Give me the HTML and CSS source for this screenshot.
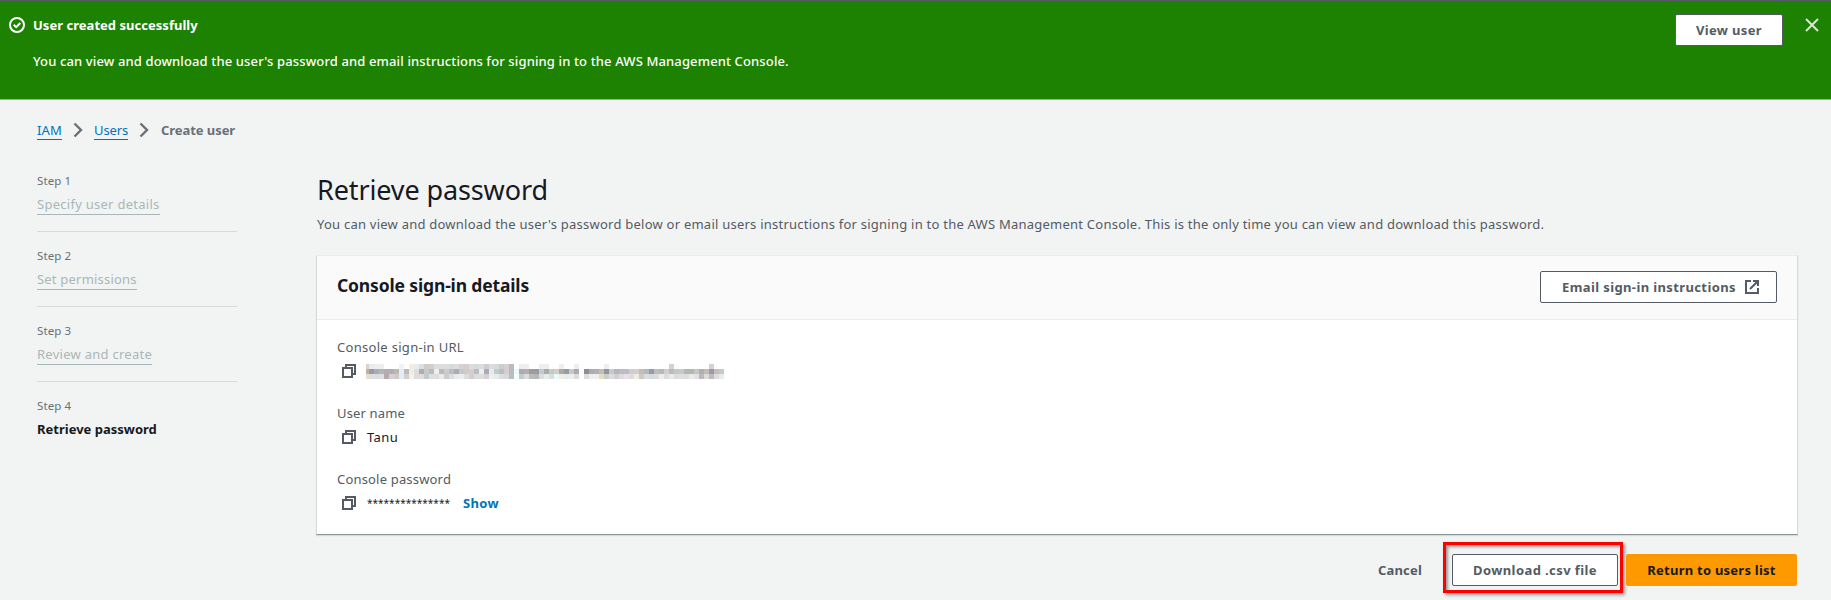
FILE: index.html
```
<!DOCTYPE html>
<html lang="en">
<head>
<meta charset="utf-8">
<title>Create user | IAM</title>
<link rel="stylesheet" href="styles.css">
</head>
<body>
<svg class="defs" aria-hidden="true">
  <symbol id="copy" viewBox="0 0 14 14"><path d="M1 4h9v9H1zM4 4V1h9v9h-3" fill="none" stroke="currentColor" stroke-width="2"/></symbol>
</svg>
<section class="flash">
  <svg class="flash-icon" viewBox="0 0 16 16"><circle cx="8" cy="8" r="7" fill="none" stroke="#fff" stroke-width="2"/><path d="M4.7 7.8 7.2 10.2 11.3 6" fill="none" stroke="#fff" stroke-width="2"/></svg>
  <div class="flash-content">
    <div class="flash-title">User created successfully</div>
    <div class="flash-text">You can view and download the user's password and email instructions for signing in to the AWS Management Console.</div>
  </div>
  <button class="btn view">View user</button>
  <svg class="close" viewBox="0 0 14 14"><path d="M1 1l12 12M13 1 1 13" fill="none" stroke="#d9e8d6" stroke-width="2"/></svg>
</section>
<nav class="crumbs">
  <a class="iam">IAM</a>
  <svg class="chev" viewBox="0 0 10 16"><path d="M1.5 1.5 8 8l-6.500 6.500" fill="none" stroke="#687078" stroke-width="2.400"/></svg>
  <a class="users">Users</a>
  <svg class="chev" viewBox="0 0 10 16"><path d="M1.500 1.500 8 8l-6.500 6.500" fill="none" stroke="#687078" stroke-width="2.400"/></svg>
  <span class="here">Create user</span>
</nav>
<div class="layout">
  <ol class="steps">
    <li><small>Step 1</small><a>Specify user details</a></li>
    <li><small>Step 2</small><a class="perms">Set permissions</a></li>
    <li><small>Step 3</small><a>Review and create</a></li>
    <li><small>Step 4</small><b>Retrieve password</b></li>
  </ol>
  <main>
    <h1>Retrieve password</h1>
    <p class="desc">You can view and download the user's password below or email users instructions for signing in to the AWS Management Console. This is the only time you can view and download this password.</p>
    <section class="card">
      <header>
        <h2>Console sign-in details</h2>
        <button class="btn email"><span>Email sign-in instructions</span>
          <svg class="ext" viewBox="0 0 14 14"><path d="M6 1H1v12h12V8M8 1h5v5M12.500 1.500 5 9" fill="none" stroke="currentColor" stroke-width="2"/></svg>
        </button>
      </header>
      <div class="fields">
        <div class="field"><div class="label url">Console sign-in URL</div><div class="value"><svg class="copy"><use href="#copy"/></svg><svg class="mosaic" id="mosaic" viewBox="0 0 358 15" shape-rendering="crispEdges"></svg></div></div>
        <div class="field"><div class="label name">User name</div><div class="value"><svg class="copy"><use href="#copy"/></svg><span class="user">Tanu</span></div></div>
        <div class="field"><div class="label pass">Console password</div><div class="value"><svg class="copy"><use href="#copy"/></svg><span class="stars">***************</span><a class="show">Show</a></div></div>
      </div>
    </section>
    <footer>
      <button class="cancel">Cancel</button>
      <div class="highlight"><button class="btn download">Download .csv file</button></div>
      <button class="btn primary">Return to users list</button>
    </footer>
  </main>
</div>
<script src="mosaic.js"></script>
</body>
</html>
```
FILE: styles.css
```
* { box-sizing: border-box; }
body { margin: 0; height: 600px; overflow: hidden; background: #f2f3f3; color: #16191f; font: 13px/22px "Noto Sans", "Open Sans", sans-serif; white-space: nowrap; }
.defs { position: absolute; width: 0; height: 0; }
svg { display: block; flex: none; }
button { font: inherit; margin: 0; }
.flash { display: flex; align-items: flex-start; height: 100px; padding: 13px 12px 0 9px; background: #1d8102; color: #fff; border-top: 1px solid #545b64; border-bottom: 1px solid #a5a9a3; }
.flash-icon { width: 16px; height: 16px; margin-top: 3px; }
.flash-content { flex: 1; margin-left: 8px; }
.flash-title { font-weight: 700; letter-spacing: .03px; }
.flash-text { margin-top: 14px; font-weight: 500; letter-spacing: .13px; }
.btn { height: 32px; padding: 0; display: flex; align-items: center; justify-content: center; background: #fff; color: #545b64; border: 1px solid #545b64; border-radius: 2px; font-weight: 700; }
.view { width: 108px; letter-spacing: .34px; }
.close { width: 14px; height: 14px; margin: 4px 0 0 22px; }
.crumbs { display: flex; align-items: center; height: 22px; margin: 19px 0 0 37px; }
.crumbs a { height: 20px; line-height: 21px; color: #0073bb; border-bottom: 1px solid #0073bb; }
.iam { width: 25px; letter-spacing: .15px; }
.users { width: 34px; letter-spacing: -.1px; }
.chev { width: 10px; height: 16px; margin: 0 11px; }
.here { margin-left: 1px; color: #687078; font-weight: 700; letter-spacing: -.06px; }
.layout { display: flex; padding: 29px 33px 0 37px; }
.steps { list-style: none; width: 200px; margin: 0; padding: 0; }
.steps li { height: 75px; display: flex; flex-direction: column; align-items: flex-start; }
.steps li:not(:last-child) { height: 62px; margin-bottom: 13px; border-bottom: 1px solid #d5dbdb; }
.steps small { font-size: 11.5px; line-height: 22px; color: #687078; letter-spacing: .1px; }
.steps a { height: 21px; margin-top: 2px; line-height: 20px; color: #aab7b8; border-bottom: 1px solid #aab7b8; letter-spacing: .27px; }
.steps .perms { letter-spacing: .2px; }
.steps b { margin-top: 2px; line-height: 20px; letter-spacing: 0; }
main { flex: 1; margin-left: 79px; min-width: 0; }
h1 { margin: 2px 0 0 1px; font-size: 27px; line-height: 36px; font-weight: 400; letter-spacing: -.12px; }
.desc { margin: 5px 0 0 1px; color: #545b64; letter-spacing: .237px; }
.card { height: 280px; margin-top: 20px; background: #fff; border: 1px solid #d5dbdb; border-top-color: #eaeded; border-bottom-color: #879596; box-shadow: 0 1px 1px #d5dbdb; }
.card header { height: 64px; padding: 0 20px 1px; display: flex; align-items: center; justify-content: space-between; background: #fafafa; border-bottom: 1px solid #eaeded; }
h2 { margin: 0 0 4px; font-size: 17.5px; line-height: 22px; letter-spacing: -.15px; }
.email { width: 237px; letter-spacing: .38px; gap: 9px; padding-left: 4px; }
.ext { width: 14px; height: 14px; }
.fields { display: grid; gap: 22px; padding: 16px 20px; }
.field { height: 44px; }
.label { color: #545b64; }
.label.url { letter-spacing: .3px; }
.label.name { letter-spacing: .16px; }
.label.pass { letter-spacing: .18px; }
.value { display: flex; align-items: center; height: 26px; padding-left: 5px; }
.copy { width: 14px; height: 14px; color: #545b64; }
.mosaic { width: 358px; height: 15px; margin-left: 10px; filter: saturate(.5); }
.user { margin-left: 11px; letter-spacing: .37px; }
.stars { width: 83px; margin-left: 11px; font-size: 10px; letter-spacing: .02px; }
.show { margin-left: 13px; color: #0073bb; font-weight: 700; letter-spacing: .3px; }
footer { display: flex; justify-content: flex-end; align-items: center; height: 51px; margin-top: 7px; padding-right: 1px; }
.cancel { margin: 4px 21px 0 0; padding: 0; border: 0; background: none; color: #545b64; font-weight: 700; letter-spacing: .18px; }
.highlight { width: 180px; height: 51px; margin-right: 3px; padding: 9px 2px 0 6px; border: 3px solid #f00; box-shadow: 2px 2px 3px #777b, inset 2px 2px 3px #777b; }
.download { width: 166px; letter-spacing: .41px; }
.primary { width: 171px; margin-top: 5px; background: #f90; border-color: #f90; color: #16191f; letter-spacing: .24px; }
```
FILE: mosaic.js
```
// Colour rows of the pixelated sign-in URL; 5px cells, the first one 3px wide.
const rows = [
  'ecb def eee eee fff fff fff eef fff feb def ddd ccc dcc ddd ddd ddd cdd ddd dcd dcc ddd cdd ddd ccd ddd cdd ccc dcd bbb fff eee eee fff fff eee eee fff fff eee fff fff eee fff fff fff fff fff eee fff fff fff fff fff fff fff fff fff fff fff fff dcd eff fff fff fff fff fff fff dcd fff fff',
  'da9 99b aab aba bab bab bba def bbb eed ddd baa bcc bbb eee bbb ccc bbc aab bcc ccc dcc bbc eee aab dee bcc bbc dcc bbb dff aab bab a99 99b bcd aaa bcc dcb aaa 99a bcc aab fff 989 aab bab cba 89a bcd abb bbc bbc ccd dcc cba abc 99b bbc abb dcc bbb bcb bcc aba aba bcb bab cba 99b cbb bcc',
  'edc ddd ddd dde baa dcd ccc def dcc fed ddd ddd bcc dde ddd dee ccc ddd dee eee ddd dcc ddd ddd dcd eee dee ddd cdd bbc eff bcc ddd bbb abb ddd dee ddd dff eed dee eee ddd fff ddd eee eee eda ccc ddd dcc ddd ede ddd eed ccb ddd cdd ddd eee ddd dee ddd dde ddd dee ede bbb ddd bbc ddd dee'
];
document.getElementById('mosaic').innerHTML = rows.map((row, y) =>
  row.split(' ').map((c, x) => {
    const left = x ? x * 5 - 2 : 0;
    return `<rect x="${left}" y="${y * 5}" width="${x ? 5 : 3}" height="5" fill="#${c}"/>`;
  }).join('')).join('');
```
